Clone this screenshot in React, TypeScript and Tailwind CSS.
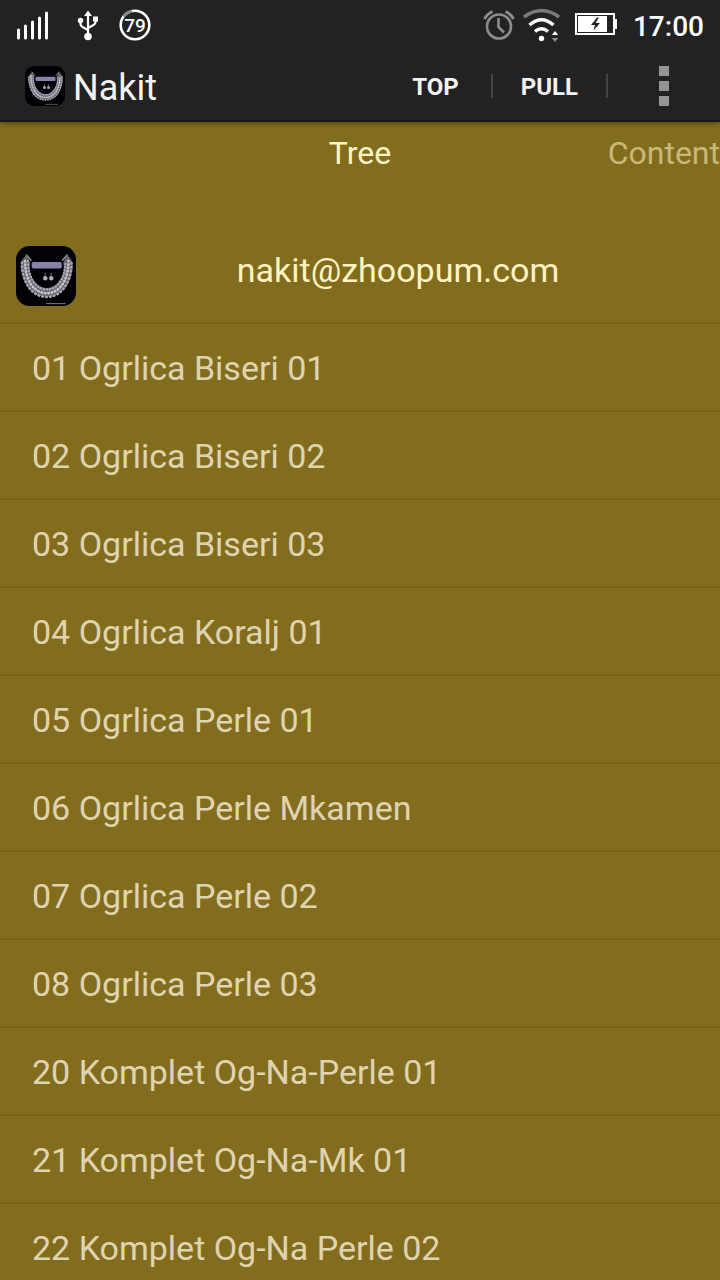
import { useState } from "react";

const ITEMS = [
  "01 Ogrlica Biseri 01",
  "02 Ogrlica Biseri 02",
  "03 Ogrlica Biseri 03",
  "04 Ogrlica Koralj 01",
  "05 Ogrlica Perle 01",
  "06 Ogrlica Perle Mkamen",
  "07 Ogrlica Perle 02",
  "08 Ogrlica Perle 03",
  "20 Komplet Og-Na-Perle 01",
  "21 Komplet Og-Na-Mk 01",
  "22 Komplet Og-Na Perle 02",
];

export default function App() {
  const [tab, setTab] = useState("Tree");

  return (
    <div className="flex h-screen flex-col overflow-hidden bg-[#826d1e] font-[Roboto,sans-serif]">
      <StatusBar />
      <ActionBar />
      <Tabs active={tab} onSelect={setTab} />

      <main className="flex min-h-0 flex-1 flex-col">
        <div className="flex border-b-2 border-[#78621a] px-4 pb-4 pt-15">
          <Logo className="size-15 shrink-0" />
          <a
            href="mailto:nakit@zhoopum.com"
            className="-mr-4 flex-1 pt-1 text-center text-[34px] leading-10 text-[#fff3c4]"
          >
            nakit@zhoopum.com
          </a>
        </div>
        <ul className="min-h-0 flex-1 overflow-y-auto [scrollbar-width:none]">
          {ITEMS.map((item) => (
            <li key={item} className="border-b-2 border-[#78621a]">
              <button type="button" className="block w-full px-8 pb-[23px] pt-[25px] text-left text-[34px] leading-[38px] text-[#e0d4b0]">
                {item}
              </button>
            </li>
          ))}
        </ul>
      </main>
    </div>
  );
}

function StatusBar() {
  return (
    <div className="relative z-20 flex h-[50px] shrink-0 items-center justify-between bg-[#222] px-4 text-white">
      <div className="flex items-center">
        <SignalIcon />
        <UsbIcon />
        <ChargeRing />
      </div>
      <div className="flex items-center">
        <AlarmIcon />
        <WifiIcon />
        <BatteryIcon />
        <span className="ml-4 pt-1 text-[28px] font-medium leading-8">17:00</span>
      </div>
    </div>
  );
}

function ActionBar() {
  return (
    <header className="relative z-10 flex h-[72px] shrink-0 items-center border-b-2 border-[#1b1716] bg-[#222] pl-[25px] pt-0.5 text-[#f3f3f3] shadow-[0_1px_5px_rgba(0,0,0,0.45)]">
      <Logo className="size-10" />
      <h1 className="ml-2 flex-1 pt-1 text-[36px] leading-10">Nakit</h1>
      <button type="button" className="px-8 pt-0.5 text-2xl font-bold">TOP</button>
      <span className="h-6 w-0.5 bg-[#444]" />
      <button type="button" className="px-7 pt-0.5 text-2xl font-bold">PULL</button>
      <span className="h-6 w-0.5 bg-[#444]" />
      <button type="button" aria-label="More options" className="flex w-28 flex-col items-center gap-[5px]">
        <span className="size-[10px] bg-[#959595]" />
        <span className="size-[10px] bg-[#959595]" />
        <span className="size-[10px] bg-[#959595]" />
      </button>
    </header>
  );
}

function Tabs({ active, onSelect }: { active: string; onSelect: (tab: string) => void }) {
  return (
    <nav className="grid h-16 shrink-0 grid-cols-3 items-center pb-0.5 text-[32px] leading-[38px]">
      <button
        type="button"
        onClick={() => onSelect("Tree")}
        className={active === "Tree" ? "col-start-2 text-[#fff3c4]" : "col-start-2 text-[#cab877]"}
      >
        Tree
      </button>
      <button
        type="button"
        onClick={() => onSelect("Content")}
        className={active === "Content" ? "text-right text-[#fff3c4]" : "text-right text-[#cab877]"}
      >
        Content
      </button>
    </nav>
  );
}

// necklace, name plate and a pair of earrings
function Logo({ className }: { className: string }) {
  return (
    <svg viewBox="0 0 40 40" className={className} aria-hidden="true">
      <rect width="40" height="40" rx="9" fill="#020105" />
      <path
        d="M7 6Q3 9 3 14Q4 22 8 28Q13 34 20.500 34Q28 34 33 28Q37 22 38 14Q38 9 34 6L31.500 11Q33 18 29 23Q25.500 28 20.500 28Q15.500 28 12 23Q8 18 9.500 11z"
        fill="#67656f"
      />
      <g fill="none" strokeLinecap="round">
        <path d="M4 11C4 25 11 34 20.500 34S37 25 37 11" stroke="#aaa8b0" strokeWidth="1.700" strokeDasharray="0.300 2.300" />
        <path d="M6 10C6 23 12 31.500 20.500 31.500S35 23 35 10" stroke="#c6c4cc" strokeWidth="1.800" strokeDasharray="0.300 2" />
        <path d="M8 10C8 21 13 29 20.500 29S33 21 33 10" stroke="#aaa8b8" strokeWidth="1.500" strokeDasharray="0.300 1.800" />
        <path d="M7 6L10 9.500M34 6L31 9.500" stroke="#8f8d83" strokeWidth="1" />
      </g>
      <rect x="10.500" y="10.700" width="20" height="4.300" rx="1.200" fill="#8783aa" />
      <path d="M19.500 18v3M23.500 18v3" stroke="#63616f" strokeWidth="0.800" />
      <circle cx="19.500" cy="21.500" r="1.500" fill="#aaa8bc" />
      <circle cx="23.500" cy="21.500" r="1.500" fill="#aaa8bc" />
      <path d="M20 38.400h13" stroke="#77767e" strokeWidth="0.700" />
    </svg>
  );
}

function SignalIcon() {
  return (
    <svg width="33" height="30" viewBox="0 0 33 30" fill="none" stroke="#fff" strokeWidth="3" strokeLinecap="round">
      <path d="M2.5 20v8M9.5 16v12M16.5 12v16M23.5 8v20M30.5 3v25" />
    </svg>
  );
}

function UsbIcon() {
  return (
    <svg width="22" height="32" viewBox="0 0 22 32" className="ml-7" fill="#fff">
      <path d="M11 5v22M3.5 12v3q0 2 2 3l5.5 3M18.5 11v2q0 2-2 3L11 19" fill="none" stroke="#fff" strokeWidth="2.2" />
      <path d="M11 1.500l4 5.500H7zM16 7.500h5v5h-5z" />
      <circle cx="3.5" cy="11.500" r="2.7" />
      <circle cx="11" cy="27.500" r="3.8" />
    </svg>
  );
}

function ChargeRing() {
  return (
    <svg width="32" height="32" viewBox="0 0 32 32" className="ml-5">
      <circle cx="16" cy="16" r="14.300" fill="none" stroke="#fff" strokeWidth="2.600" />
      <path d="M4.500 7.500A14.300 14.300 0 0 1 13 2" fill="none" stroke="#858585" strokeWidth="2.800" />
      <text x="16" y="22.500" textAnchor="middle" fill="#fff" fontSize="19" fontFamily="Roboto, sans-serif" fontWeight="500">
        79
      </text>
    </svg>
  );
}

function AlarmIcon() {
  return (
    <svg width="32" height="32" viewBox="0 0 32 32" fill="none" stroke="#8d8d8d" strokeWidth="2.600">
      <circle cx="16" cy="17.500" r="12" />
      <path d="M15.500 9V18l5.500 5.500" />
      <path d="M1.500 10Q4 5 9.500 2.500M30.500 10Q28 5 22.500 2.500" strokeWidth="3" />
    </svg>
  );
}

function WifiIcon() {
  return (
    <svg width="37" height="34" viewBox="0 0 37 34" className="ml-2" fill="none" strokeWidth="3.500">
      <path d="M1 9Q18.500-4 36 9" stroke="#7a7a7a" />
      <path d="M6.500 17Q18.500 6.500 30.500 17M12 23.500Q18.500 18 25 23.500" stroke="#fff" />
      <circle cx="18.500" cy="30.500" r="2.700" fill="#fff" />
      <path d="M32 23l3.200 4h-6.400z" fill="#fff" />
      <path d="M32 34l3.200-4h-6.400z" fill="#8d8d8d" />
    </svg>
  );
}

function BatteryIcon() {
  return (
    <svg width="42" height="24" viewBox="0 0 42 24" className="ml-[15px]">
      <rect x="1" y="1" width="38" height="20" fill="none" stroke="#fff" strokeWidth="2" />
      <path d="M3 3h29v16H3zM40 6h2v10h-2z" fill="#fff" />
      <path d="M22 4.500l-6 7.500h4l-1.500 5.500 6.500-7.500h-4.500l3.500-5.500z" fill="#222" />
    </svg>
  );
}
